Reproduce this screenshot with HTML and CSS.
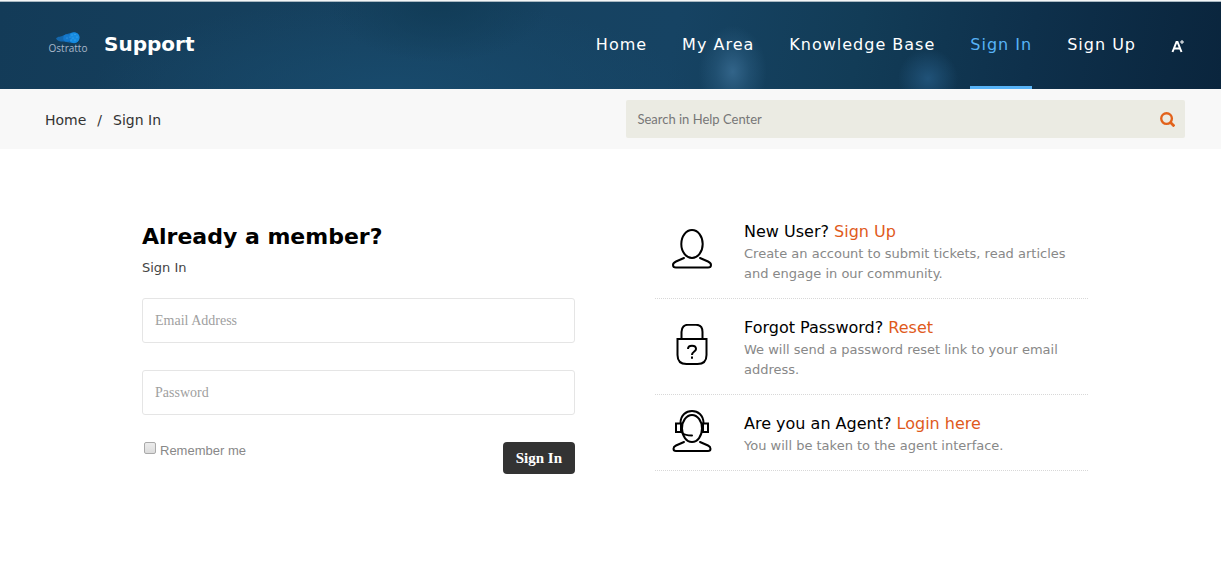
FILE: index.html
```html
<!DOCTYPE html>
<html lang="en">
<head>
    <meta charset="UTF-8">
    <meta name="viewport" content="width=device-width, initial-scale=1.0">
    <title>Sign In - Support</title>
    <link rel="stylesheet" href="styles.css">
</head>
<body>
    <header class="header">
        <a class="brand" href="#">
            <svg class="logo" viewBox="0 0 40 24" aria-hidden="true">
                <path d="M8 6.500C10 4 13 5 15 3.500C19 2 22 0.500 26 0.500C30 0.500 32 3 31.500 6C31 10 28 11.500 25 11C21 11 18 9.500 15 9.500C12 9.500 9 9 8 6.500Z" fill="#1467ad"/>
                <circle cx="26" cy="5.700" r="5.500" fill="#168be0"/>
                <circle cx="19" cy="6" r="3.800" fill="#1478cc"/>
                <g fill="#5bb8f2">
                    <circle cx="24" cy="3" r="0.500"/><circle cx="27" cy="2.500" r="0.500"/><circle cx="29" cy="5" r="0.500"/>
                    <circle cx="25" cy="6" r="0.500"/><circle cx="22" cy="5" r="0.500"/><circle cx="27" cy="8" r="0.500"/>
                    <circle cx="23" cy="8" r="0.500"/><circle cx="19" cy="6" r="0.500"/>
                </g>
                <text x="20" y="20" text-anchor="middle" class="logo-text">Ostratto</text>
            </svg>
            <span>Support</span>
        </a>
        <nav class="nav">
            <a href="#">Home</a>
            <a href="#">My Area</a>
            <a href="#">Knowledge Base</a>
            <a class="active" href="#">Sign In</a>
            <a href="#">Sign Up</a>
            <button class="text-size" type="button" aria-label="Text size">
                <svg viewBox="0 0 14 14" fill="none" stroke="#fff">
                    <path d="M1.500 13L5.500 3H6.500L10.500 13M3 9.500H9" stroke-width="2"/>
                    <path d="M11 1V5M9 3H13" stroke-width="1"/>
                </svg>
            </button>
        </nav>
    </header>

    <div class="subheader">
        <div class="breadcrumb">
            <a href="#">Home</a>
            <span>/</span>
            <span>Sign In</span>
        </div>
        <form class="search">
            <input type="text" placeholder="Search in Help Center" aria-label="Search in Help Center">
            <button type="button" aria-label="Search">
                <svg viewBox="0 0 16 16" fill="none" stroke="#e2621b">
                    <circle cx="7" cy="7" r="5.700" stroke-width="2.500"/>
                    <path d="M11 11L15.300 15.300" stroke-width="2.900"/>
                </svg>
            </button>
        </form>
    </div>

    <main class="content">
        <form class="login">
            <h1>Already a member?</h1>
            <p>Sign In</p>
            <input class="field" type="email" placeholder="Email Address" aria-label="Email Address">
            <input class="field" type="password" placeholder="Password" aria-label="Password">
            <div class="actions">
                <label><input type="checkbox" class="remember"> Remember me</label>
                <button type="button">Sign In</button>
            </div>
        </form>

        <ul class="help">
            <li>
                <svg viewBox="0 0 44 48" fill="none" stroke="#000" stroke-width="2" stroke-linecap="round">
                    <ellipse cx="22" cy="16" rx="10.700" ry="14"/>
                    <path d="M14 30L6 33.500C3.500 34.700 3 36 3 37C3 38.800 4 39.500 6 39.500H38C40 39.500 41 38.800 41 37C41 36 40.500 34.700 38 33.500L30 30"/>
                </svg>
                <div>
                    <h2>New User? <a href="#">Sign Up</a></h2>
                    <p>Create an account to submit tickets, read articles and engage in our community.</p>
                </div>
            </li>
            <li>
                <svg viewBox="0 0 44 48" fill="none" stroke="#000" stroke-width="2">
                    <path d="M11.500 15V8C11.500 3 14.500 0.800 18 0.800H26C29.500 0.800 32.500 3 32.500 8V15"/>
                    <path d="M7.500 15H36.500V31C36.500 37 33 40 27.500 40H16.500C11 40 7.500 37 7.500 31Z"/>
                    <path d="M18 25C18 20.500 26 20.500 26 25C26 27.500 22 27.500 22 31M22 32.500V34.700"/>
                </svg>
                <div>
                    <h2>Forgot Password? <a href="#">Reset</a></h2>
                    <p>We will send a password reset link to your email address.</p>
                </div>
            </li>
            <li>
                <svg viewBox="0 0 44 48" fill="none" stroke="#000" stroke-width="2" stroke-linecap="round">
                    <path d="M10.500 13C10.500 -3 33.500 -3 33.500 13"/>
                    <ellipse cx="22" cy="18.500" rx="10" ry="13.500"/>
                    <path d="M6 13.500H11V22H6ZM33 13.500H38V22H33ZM12 22.500C14 25 18 25.500 22 25.500"/>
                    <path d="M14 32L6 35.500C4 36.500 3.500 37.500 3.500 38.700C3.500 40.500 4.500 41 6 41H38C39.500 41 40.500 40.500 40.500 38.700C40.500 37.500 40 36.500 38 35.500L30 32"/>
                </svg>
                <div>
                    <h2>Are you an Agent? <a href="#">Login here</a></h2>
                    <p>You will be taken to the agent interface.</p>
                </div>
            </li>
        </ul>
    </main>
</body>
</html>
```
FILE: styles.css
```css
* {
    box-sizing: border-box;
}
body {
    margin: 0;
    border-top: 1px solid #f4f6f7;
    background-color: #fff;
    font-family: Verdana, "DejaVu Sans", sans-serif;
    color: #000;
}
a {
    color: inherit;
    text-decoration: none;
}
h1, h2, p, ul {
    margin: 0;
    padding: 0;
}
button {
    border: none;
    cursor: pointer;
}

/* top bar */
.header {
    display: flex;
    justify-content: space-between;
    height: 88px;
    padding: 0 36px 0 48px;
    border-top: 1px solid #a9b8c2;
    background:
        radial-gradient(ellipse 34px 46px at 60% 80%, #326489 0%, #2b5d8180 50%, transparent 100%),
        radial-gradient(circle 30px at 76% 88%, #205278 0%, transparent 100%),
        radial-gradient(ellipse 110px 60px at 36% 0%, #113c57 0%, transparent 100%),
        radial-gradient(ellipse 300px 90px at 32% 100%, #184a6c 0%, transparent 100%),
        linear-gradient(100deg, #133b58 0%, #16415f 30%, #164363 55%, #123c57 70%, #0e304b 84%, #0a253d 100%);
    color: #fff;
}
.brand {
    display: flex;
    align-items: center;
    gap: 16px;
    padding-bottom: 3px;
    font-size: 20px;
    font-weight: bold;
}
.logo {
    width: 40px;
    height: 24px;
}
.logo-text {
    font-family: "Open Sans", sans-serif;
    font-size: 10px;
    font-weight: normal;
    fill: #aab8ca;
}
.nav {
    display: flex;
    gap: 35px;
    font-size: 16px;
    letter-spacing: 1px;
}
.nav a {
    display: flex;
    align-items: center;
    border-bottom: 3px solid transparent;
}
.nav .active {
    color: #57b3f7;
    border-bottom-color: #57b3f7;
}
.text-size {
    padding: 0;
    background: none;
}
.text-size svg {
    display: block;
    width: 14px;
    height: 14px;
}

/* breadcrumb and search */
.subheader {
    display: flex;
    justify-content: space-between;
    align-items: center;
    height: 60px;
    padding: 0 36px 0 45px;
    background-color: #f8f8f8;
}
.breadcrumb {
    display: flex;
    gap: 11px;
    padding-top: 2px;
    font-size: 14px;
    color: #333;
}
.search {
    display: flex;
    width: 49%;
    height: 38px;
    border-radius: 2px;
    background-color: #ebebe3;
}
.search input {
    flex: 1;
    padding: 0 11px;
    border: none;
    background: none;
    font-family: Lato, sans-serif;
    font-size: 13px;
}
.search input::placeholder {
    color: #777;
}
.search button {
    padding: 0 10px;
    background: none;
}
.search svg {
    display: block;
    width: 15px;
    height: 15px;
}

/* sign in form and help links */
.content {
    display: grid;
    grid-template-columns: 1fr 1fr;
    gap: 80px;
    padding: 54px 133px 54px 142px;
}
.login {
    padding-top: 19px;
}
.login h1 {
    font-size: 22px;
    line-height: 30px;
}
.login p {
    margin: 7px 0 21px;
    font-size: 13px;
    line-height: 18px;
    color: #444;
}
.field {
    display: block;
    width: 100%;
    height: 45px;
    margin-bottom: 27px;
    padding: 0 12px;
    border: 1px solid #e5e5e5;
    border-radius: 3px;
    font-family: "Liberation Serif", serif;
    font-size: 14px;
}
.field::placeholder {
    color: #a0a0a0;
}
.actions {
    display: flex;
    justify-content: space-between;
    align-items: flex-start;
}
.actions label {
    display: flex;
    gap: 4px;
    font-family: "Liberation Sans", sans-serif;
    font-size: 13px;
    line-height: 18px;
    color: #888;
}
.remember {
    appearance: none;
    width: 12px;
    height: 12px;
    margin: 0 0 0 2px;
    border: 1px solid #aaa;
    border-radius: 2px;
    background: linear-gradient(#ececec, #dcdcdc);
}
.remember:checked {
    background: #555;
}
.actions button {
    height: 32px;
    padding: 0 13px;
    border-radius: 4px;
    background-color: #333;
    color: #fff;
    font-family: "Liberation Serif", serif;
    font-size: 15px;
    font-weight: bold;
}
.help {
    list-style: none;
}
.help li {
    display: flex;
    align-items: center;
    padding: 17px 0 14px;
    border-bottom: 1px dotted #d8d8d8;
}
.help svg {
    flex: none;
    width: 44px;
    height: 48px;
    margin: -4px 30px -4px 15px;
}
.help h2 {
    font-size: 16px;
    font-weight: normal;
    line-height: 24px;
}
.help h2 a {
    color: #e05a1c;
}
.help p {
    font-size: 13px;
    line-height: 20px;
    color: #888;
}
```
